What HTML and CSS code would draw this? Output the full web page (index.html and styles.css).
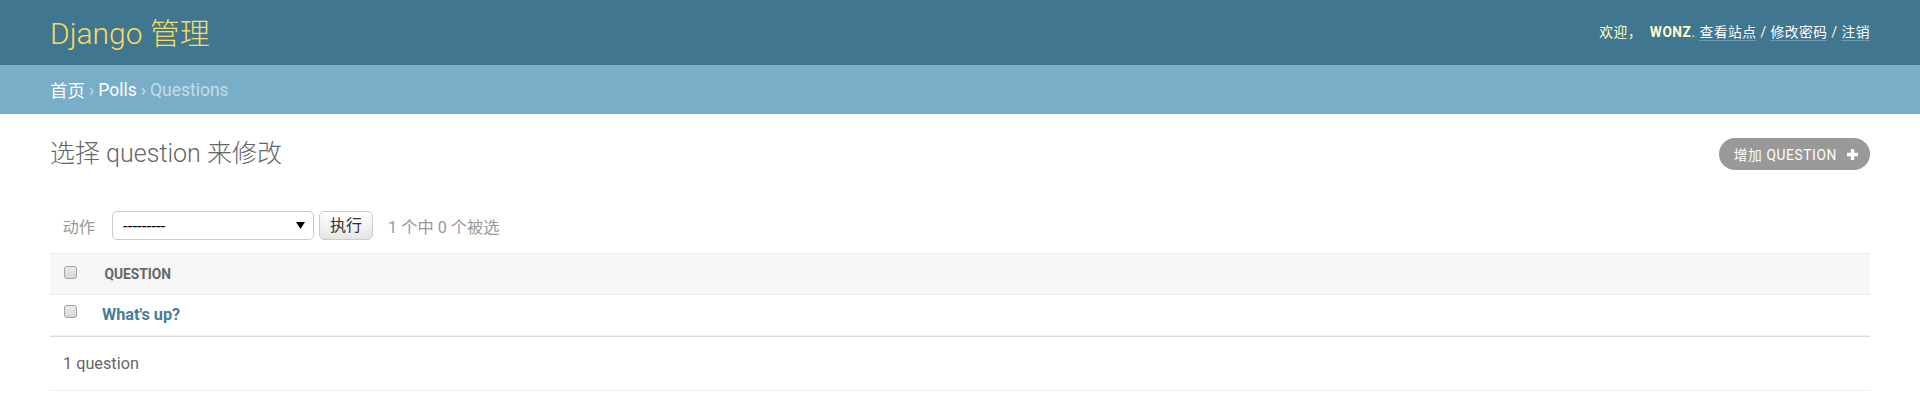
FILE: index.html
```html
<!DOCTYPE html>
<html lang="zh-hans">
<head>
<meta charset="utf-8">
<title>选择 question 来修改 | Django 站点管理员</title>
<link rel="stylesheet" href="styles.css">
</head>
<body>
<div class="container">
  <header class="header">
    <div class="branding"><h1 class="site-name"><a href="#">Django 管理</a></h1></div>
    <div class="user-tools">
      欢迎，
      <strong>WONZ</strong>.
      <a href="#">查看站点</a> /
      <a href="#">修改密码</a> /
      <a href="#">注销</a>
    </div>
  </header>
  <nav class="breadcrumbs">
    <a href="#">首页</a>
    <span class="sep">›</span>
    <a href="#">Polls</a>
    <span class="sep">›</span>
    <span class="current">Questions</span>
  </nav>
  <main class="content">
    <div class="title-row">
      <h1 class="page-title">选择 question 来修改</h1>
      <a class="addlink" href="#">
        <span>增加 QUESTION</span>
        <svg class="plus" width="13" height="13" viewBox="0 0 13 13"><path d="M6.5 1v11M1 6.5h11" stroke="#fff" stroke-width="3.4" fill="none"/></svg>
      </a>
    </div>
    <div class="changelist">
      <div class="actions">
        <label class="action-label">动作</label>
        <div class="select-wrap">
          <select class="action-select">
            <option>---------</option>
          </select>
          <svg class="select-arrow" width="9" height="7" viewBox="0 0 9 7"><path d="M0 0h9L4.5 7z" fill="#000"/></svg>
        </div>
        <button class="go-button" type="button">执行</button>
        <span class="action-counter">1 个中 0 个被选</span>
      </div>
      <table class="result-list">
        <thead>
          <tr>
            <th class="check-col"><input type="checkbox" class="cb"></th>
            <th class="col-head"><span class="text">QUESTION</span></th>
          </tr>
        </thead>
        <tbody>
          <tr>
            <td class="check-col top"><input type="checkbox" class="cb"></td>
            <th class="field"><a href="#">What's up?</a></th>
          </tr>
        </tbody>
      </table>
      <p class="paginator">1 question</p>
    </div>
  </main>
</div>
</body>
</html>
```
FILE: styles.css
```css
* { box-sizing: border-box; }
html, body {
  margin: 0;
  padding: 0;
  background: #fff;
}
body {
  font-family: Roboto, "Noto Sans CJK SC", "Liberation Sans", sans-serif;
  font-size: 17.5px;
  color: #333;
}
a { text-decoration: none; }

.header {
  height: 65px;
  padding: 0 50px;
  background: #417690;
  color: #ffc;
  display: flex;
  align-items: center;
  justify-content: space-between;
}
.site-name {
  margin: 2px 0 0 0;
  font-size: 30px;
  font-weight: 300;
  line-height: 1;
}
.site-name a { color: #f5dd5d; }
.user-tools {
  font-size: 13.75px;
  font-weight: 400;
  letter-spacing: 0.5px;
  color: #ffc;
  line-height: 1.2;
  margin-top: -1px;
}
.user-tools strong {
  font-weight: 700;
  margin-left: 4px;
}
.user-tools a {
  color: #fff;
  border-bottom: 1px solid rgba(255,255,255,0.25);
}

.breadcrumbs {
  height: 49px;
  padding: 0 50px;
  background: #79aec8;
  color: #c4dce8;
  font-size: 17.5px;
  display: flex;
  align-items: center;
  gap: 4px;
}
.breadcrumbs a { color: #fff; }
.breadcrumbs .sep { color: #c4dce8; }
.breadcrumbs .current { color: #c4dce8; }

.content {
  padding: 24px 50px 0;
}
.title-row {
  display: flex;
  align-items: center;
  justify-content: space-between;
  height: 32px;
}
.page-title {
  margin: 0;
  font-size: 25px;
  font-weight: 300;
  color: #666;
  line-height: 32px;
}
.addlink {
  display: flex;
  align-items: center;
  height: 32px;
  padding: 0 11px 0 15px;
  background: #999;
  border-radius: 16px;
  color: #fff;
  font-size: 13.75px;
  letter-spacing: 0.625px;
  font-weight: 400;
  text-transform: uppercase;
}
.addlink .plus { margin-left: 9px; }

.changelist { margin-top: 28px; }
.actions {
  display: flex;
  align-items: center;
  padding: 13px 12.5px 13px;
  color: #999;
  font-size: 16.25px;
  height: 55px;
}
.action-label { color: #999; }
.select-wrap {
  position: relative;
  margin-left: 17px;
  width: 202px;
  height: 29px;
}
.action-select {
  appearance: none;
  -webkit-appearance: none;
  width: 100%;
  height: 100%;
  border: 1px solid #ccc;
  border-radius: 5px;
  background: #fff;
  color: #000;
  font-family: Roboto, "Liberation Sans", sans-serif;
  font-size: 17px;
  padding: 0 0 0 10px;
  margin: 0;
}
.select-arrow {
  position: absolute;
  right: 9px;
  top: 11px;
  pointer-events: none;
}
.go-button {
  margin-left: 5px;
  height: 29px;
  padding: 0 10px;
  border: 1px solid #ccc;
  border-radius: 5px;
  background: #fff;
  box-shadow: 0 -18px 25px -12px rgba(0,0,0,0.15) inset;
  color: #333;
  font-family: Roboto, "Noto Sans CJK SC", sans-serif;
  font-size: 16px;
  line-height: 1;
}
.action-counter {
  margin-left: 15px;
  color: #999;
  font-size: 16.25px;
}

.result-list {
  width: 100%;
  border-collapse: collapse;
}
.result-list thead th {
  background: #f6f6f6;
  border-top: 1px solid #eee;
  border-bottom: 1px solid #eee;
  height: 41px;
  padding: 0;
  vertical-align: middle;
  text-align: left;
}
.check-col {
  width: 42px;
  padding: 0 0 0 14px;
  text-align: left;
}
.result-list td.check-col { padding: 10px 0 10px 14px; vertical-align: top; }
.result-list thead th.check-col { padding: 0 0 4px 14px; }
.col-head .text {
  display: block;
  padding: 0 12.5px;
  font-size: 13.75px;
  font-weight: 700;
  color: #666;
  text-transform: uppercase;
}
.result-list tbody th,
.result-list tbody td {
  border-bottom: 1px solid #eee;
}
.result-list tbody th.field {
  padding: 10px 10px;
  text-align: left;
  font-size: 16.25px;
  line-height: 20px;
  font-weight: 700;
  vertical-align: top;
  height: 41px;
}
.field a { color: #447e9b; }

.cb {
  appearance: none;
  -webkit-appearance: none;
  width: 13px;
  height: 13px;
  margin: 0;
  display: block;
  border: 1px solid #a3a3a3;
  border-radius: 3px;
  background: linear-gradient(#ececec, #d6d6d6);
}

.paginator {
  margin: 0;
  border-top: 1px solid #ddd;
  border-bottom: 1px solid #eee;
  height: 55px;
  padding: 0 13px;
  display: flex;
  align-items: center;
  color: #666;
  font-size: 16.25px;
}
```
